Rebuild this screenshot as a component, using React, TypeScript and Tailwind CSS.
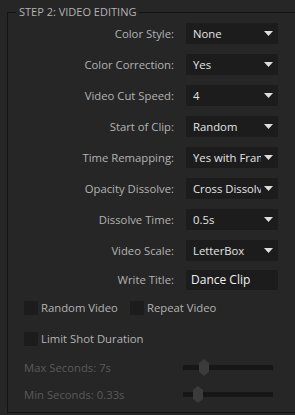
const font = "font-['Segoe_UI','Open_Sans',sans-serif]"

const selects = [
  { label: 'Color Style:', value: 'None' },
  { label: 'Color Correction:', value: 'Yes' },
  { label: 'Video Cut Speed:', value: '4' },
  { label: 'Start of Clip:', value: 'Random' },
  { label: 'Time Remapping:', value: 'Yes with Frame Blending' },
  { label: 'Opacity Dissolve:', value: 'Cross Dissolve' },
  { label: 'Dissolve Time:', value: '0.5s' },
  { label: 'Video Scale:', value: 'LetterBox' },
]

const Arrow = () => (
  <svg width="9" height="5" viewBox="0 0 9 5" className="shrink-0">
    <polygon points="0,0 9,0 4.5,5" fill="#dedede" />
  </svg>
)

const Row = ({ label, children }: { label: string; children: React.ReactNode }) => (
  <div className="flex items-center h-[21px]">
    <span className="w-[166px] text-right text-[#b3b3b3]">{label}</span>
    <div className="ml-[12px] w-[92px] h-full">{children}</div>
  </div>
)

const Check = ({ label }: { label: string }) => (
  <label className="flex items-center">
    <span className="w-[14px] h-[14px] bg-[#1c1c1c]" />
    <span className="ml-[3px] text-[#b3b3b3]">{label}</span>
  </label>
)

const Slider = ({ label, pos }: { label: string; pos: number }) => (
  <div className="flex items-center h-[17px] pl-[16px] pr-[5px]">
    <span className="flex-1 text-[#5a5a5a]">{label}</span>
    <div className="relative w-[90px] h-[5px] bg-[#171717]">
      <svg
        width="10"
        height="17"
        viewBox="0 0 10 17"
        className="absolute top-[-6px]"
        style={{ left: pos }}
      >
        <polygon points="5,0 10,4 10,13 5,17 0,13 0,4" fill="#3b3b3b" />
      </svg>
    </div>
  </div>
)

export default function App() {
  return (
    <div className={`w-[295px] h-[415px] bg-[#262626] overflow-hidden text-[11.3px] leading-[16px] ${font}`}>
      <fieldset className="ml-[7px] mt-[5px] w-[300px] h-[408px] border border-[#131313]">
        <legend className="ml-[8px] px-[3px] h-[14px] text-[11px] leading-[14px] text-[#b3b3b3]">
          STEP 2: VIDEO EDITING
        </legend>

        <div className="w-[270px] pt-[4px] flex flex-col gap-[10px]">
          {selects.map((s) => (
            <Row key={s.label} label={s.label}>
              <div className="h-full bg-[#1c1c1c] flex items-center pl-[7px] pr-[5px]">
                <span className="flex-1 overflow-hidden whitespace-nowrap text-[#e4e4e4]">{s.value}</span>
                <span className="ml-[3px]"><Arrow /></span>
              </div>
            </Row>
          ))}
        </div>

        <div className="w-[270px] mt-[9px]">
          <div className="flex items-center h-[20px]">
            <span className="w-[166px] text-right text-[#b3b3b3]">Write Title:</span>
            <div className="ml-[12px] w-[92px] h-full bg-[#1c1c1c] flex items-center pl-[5px] text-[12px] text-[#f0f0f0]">
              Dance Clip
            </div>
          </div>
        </div>

        <div className="pl-[16px] mt-[10px] flex flex-col gap-[15px]">
          <div className="flex items-center gap-[12px]">
            <Check label="Random Video" />
            <Check label="Repeat Video" />
          </div>
          <Check label="Limit Shot Duration" />
        </div>

        <div className="w-[270px] mt-[12px] flex flex-col gap-[10px]">
          <Slider label="Max Seconds: 7s" pos={16} />
          <Slider label="Min Seconds: 0.33s" pos={10} />
        </div>
      </fieldset>
    </div>
  )
}
